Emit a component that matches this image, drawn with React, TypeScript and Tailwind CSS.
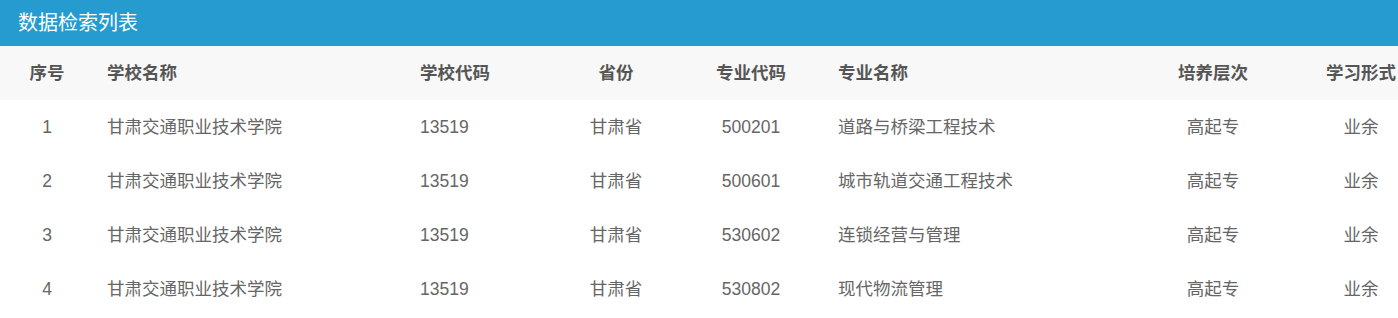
import React from 'react';

const rows = [
  { no: 1, code: '500201', major: '道路与桥梁工程技术' },
  { no: 2, code: '500601', major: '城市轨道交通工程技术' },
  { no: 3, code: '530602', major: '连锁经营与管理' },
  { no: 4, code: '530802', major: '现代物流管理' },
];

const grid = 'grid grid-cols-[94px_313px_148px_122px_148px_315px_146px_150px] h-[54px] items-center';

const App: React.FC = () => {
  return (
    <div className="w-[1398px] h-[318px] overflow-hidden bg-white font-['Liberation_Sans','Noto_Sans_CJK_SC',sans-serif]">
      <div className="h-[46px] bg-[#269bcf] flex items-center pl-[18px] text-[20px] text-white">数据检索列表</div>
      <div className="w-[1436px]">
        <div className={`${grid} bg-[#f8f8f8] text-[17.5px] font-bold text-[#555]`}>
          <div className="text-center">序号</div>
          <div className="pl-[13px]">学校名称</div>
          <div className="pl-[13px]">学校代码</div>
          <div className="text-center">省份</div>
          <div className="text-center">专业代码</div>
          <div className="pl-[13px]">专业名称</div>
          <div className="text-center">培养层次</div>
          <div className="text-center">学习形式</div>
        </div>
        {rows.map((r) => (
          <div key={r.no} className={`${grid} text-[17.5px] text-[#666]`}>
            <div className="text-center">{r.no}</div>
            <div className="pl-[13px]">甘肃交通职业技术学院</div>
            <div className="pl-[13px]">13519</div>
            <div className="text-center">甘肃省</div>
            <div className="text-center">{r.code}</div>
            <div className="pl-[13px]">{r.major}</div>
            <div className="text-center">高起专</div>
            <div className="text-center">业余</div>
          </div>
        ))}
      </div>
    </div>
  );
};

export default App;
